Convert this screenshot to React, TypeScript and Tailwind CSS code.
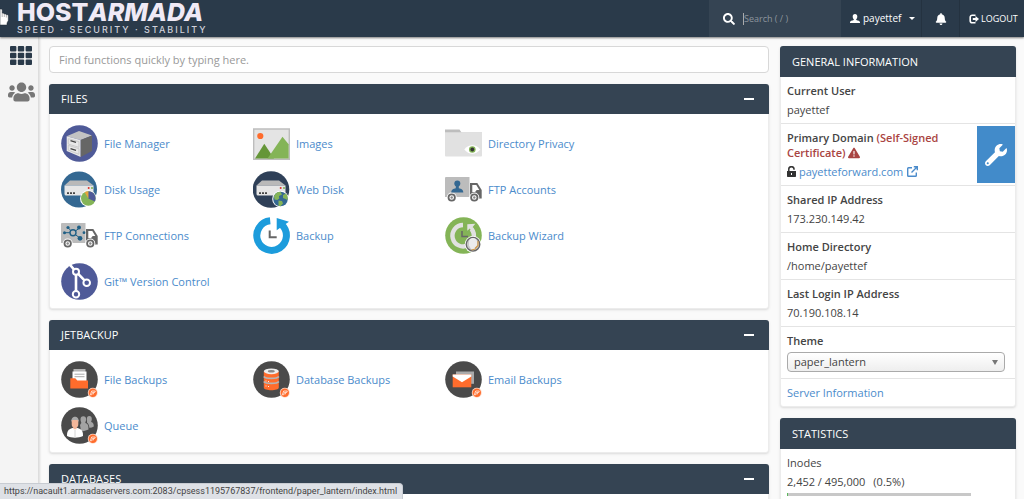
import type { ReactNode } from "react";
import { FaBell, FaSearch, FaUsers, FaWrench } from "react-icons/fa";
import { FaTriangleExclamation } from "react-icons/fa6";

function Icon({ children }: { children: ReactNode }) {
  return (
    <svg className="w-[37px] h-[37px] shrink-0" viewBox="0 0 37 37" fill="none" aria-hidden="true">
      {children}
    </svg>
  );
}

function Server() {
  return (
    <>
      <path d="M9 9.5h17l6.5 5h-29z" fill="#b9b9b9" />
      <path d="M3.5 14.5h29V23a1.5 1.5 0 0 1-1.5 1.5H5A1.5 1.5 0 0 1 3.5 23z" fill="#e6e6e6" />
      <path d="M6 21.2h2v1.8H6zM9 21.2h2v1.8H9zM12 21.2h2v1.8h-2z" fill="#444" />
      <circle cx="27.7" cy="17" r="1" fill="#d9342b" />
      <circle cx="31" cy="17" r="1" fill="#7db04e" />
    </>
  );
}

function Truck({ children }: { children: ReactNode }) {
  return (
    <>
      <path d="M1 6h23.5v20H0V7a1 1 0 0 1 1-1z" fill="#bcbcbc" />
      <path d="M25 12h7.3l4.4 7v8.5H25z" fill="#666" />
      <path d="M27.3 14h4l3 5h-2.6l-1.6 2h-2.8z" fill="#fff" />
      <circle cx="6.7" cy="26.5" r="5" fill="#fff" />
      <circle cx="29.3" cy="26.5" r="5" fill="#fff" />
      <circle cx="6.7" cy="26.5" r="3.2" stroke="#666" strokeWidth="1.8" />
      <circle cx="29.3" cy="26.5" r="3.2" stroke="#666" strokeWidth="1.8" />
      <circle cx="6.7" cy="26.5" r="1.2" fill="#888" />
      <circle cx="29.3" cy="26.5" r="1.2" fill="#888" />
      {children}
    </>
  );
}

// Dark disc with the small orange badge shared by all JetBackup icons
function JetDisc({ children }: { children: ReactNode }) {
  return (
    <Icon>
      <circle cx="18.5" cy="18.5" r="18.3" fill="#4a4a4a" />
      {children}
      <circle cx="31.8" cy="31.8" r="5" fill="#ffd9c7" />
      <circle cx="31.8" cy="31.8" r="4.2" fill="#ff6c2c" />
      <path d="M29.3 33.8l1.4-3.8h3.6l-.5 1.4h-2.3l-.9 2.4zM32 33.5l.8-2" stroke="#fff" strokeWidth=".7" />
    </Icon>
  );
}

const icons = {
  fileManager: (
    <Icon>
      <circle cx="18.5" cy="18.5" r="18.3" fill="#4f5a98" />
      <path d="M5.7 11.3L18 6l13 4.5-11.3 4.6z" fill="#c3c3c3" />
      <path d="M5.7 11.3l14 3.8V32l-14-6z" fill="#e8e8e8" />
      <path d="M19.7 15.1L31 10.5V26l-11.3 6z" fill="#666" />
      <path d="M7.3 13.7l10.6 3v5.6l-10.6-3.2zM7.3 20.4l10.6 3.3v5.6L7.3 25.2z" stroke="#c4c4c4" strokeWidth=".8" />
      <path d="M9.5 15.7l5.5 1.6M9.5 23.6l5.5 1.8" stroke="#444" strokeWidth="1.3" />
    </Icon>
  ),
  diskUsage: (
    <Icon>
      <circle cx="18" cy="18.5" r="18" fill="#346892" />
      <Server />
      <circle cx="27.3" cy="27.5" r="8.3" fill="#fff" />
      <circle cx="27.3" cy="27.5" r="7.3" fill="#84b457" />
      <path d="M27.3 27.5v-7.3a7.3 7.3 0 0 1 6.6 10.4z" fill="#4f5a98" />
      <path d="M27.3 27.5v-7.3a7.3 7.3 0 0 0-3.6 1z" fill="#e8a33d" />
    </Icon>
  ),
  ftpConnections: (
    <Icon>
      <Truck>
        <path d="M12 15.7H3.5M12 15.7L7 10.7M12 15.7l7-5M12 15.7l7 5.5" stroke="#1f5f85" strokeWidth="1" />
        <circle cx="12" cy="15.7" r="3" fill="#bcbcbc" stroke="#1f5f85" strokeWidth="1.4" />
        <circle cx="3.5" cy="15.7" r="1.5" fill="#1f5f85" />
        <circle cx="7" cy="10.5" r="1.6" fill="#1f5f85" />
        <circle cx="18" cy="10.5" r="2" fill="#1f5f85" />
        <circle cx="19" cy="21.3" r="2.4" fill="#1f5f85" />
        <circle cx="23" cy="15.7" r="1.4" fill="#1f5f85" />
      </Truck>
    </Icon>
  ),
  git: (
    <Icon>
      <circle cx="18.5" cy="18.5" r="18.3" fill="#4f5a98" />
      <path d="M9 1.8l6 6.9v22.6M15 8.7l10.7 11" stroke="#fff" strokeWidth="2.6" />
      <g fill="#4f5a98" stroke="#fff" strokeWidth="2">
        <circle cx="15" cy="8.7" r="3" />
        <circle cx="25.7" cy="19.7" r="3.3" />
        <circle cx="15" cy="31.2" r="3.2" />
      </g>
    </Icon>
  ),
  images: (
    <Icon>
      <path d="M.7 4h35.6v30.3H.7z" fill="#e4e4e4" stroke="#bdbdbd" strokeWidth="1.4" />
      <circle cx="7.3" cy="11" r="3.1" fill="#ff6c2c" />
      <path d="M2 33.5l9.3-14.8L21 33.5z" fill="#659638" />
      <path d="M14.5 33.5l15-21.8 6.1 7.5v14.3z" fill="#84b457" />
    </Icon>
  ),
  webDisk: (
    <Icon>
      <circle cx="18" cy="18.5" r="18.3" fill="#2f4058" />
      <Server />
      <circle cx="27.5" cy="28" r="8.3" fill="#fff" />
      <circle cx="27.5" cy="28" r="7.3" fill="#346892" />
      <path d="M21 25c1.5-3 4-4.5 6.5-4.3l1.5 2.8-3 1.5.3 2.5-2 1.5-2.8-.5zM30 24l3-1.5c1.5 2 2 4.5 1.5 6.5l-2-1-2.5-1zM25.5 29.5l3.5.5 1 2.5-2.5 2.7-2-.5z" fill="#84b457" />
    </Icon>
  ),
  backup: (
    <Icon>
      <path d="M17.2 3.8a14.8 14.8 0 1 0 11.6 4" stroke="#1c9cdc" strokeWidth="7" />
      <path d="M23.7 1l12.3 3.7-4.5 3-7.8 5.6z" fill="#1c9cdc" />
      <path d="M16.7 13.5v6.8h7" stroke="#666" strokeWidth="2" />
    </Icon>
  ),
  directoryPrivacy: (
    <Icon>
      <path d="M0 4.5h14.5l2 3H37v4H0z" fill="#bdbdbd" />
      <path d="M0 7.3h37v23.2a1 1 0 0 1-1 1H1a1 1 0 0 1-1-1z" fill="#e1e1e1" />
      <path d="M19.3 24.5c4.5-5.6 11.5-5.6 16 0-4.5 5.6-11.5 5.6-16 0z" fill="#fff" />
      <circle cx="27.3" cy="24.5" r="3.3" fill="#84b457" />
      <circle cx="27.3" cy="24.5" r="1.9" fill="#333" />
    </Icon>
  ),
  ftpAccounts: (
    <Icon>
      <Truck>
        <circle cx="12.3" cy="12.5" r="3" fill="#346892" />
        <path d="M10.8 14h3v3.2c2.5.6 4.5 1.2 4.5 4.3h-12c0-3.1 2-3.7 4.5-4.3z" fill="#346892" />
      </Truck>
    </Icon>
  ),
  backupWizard: (
    <Icon>
      <circle cx="18.5" cy="18.5" r="18.3" fill="#84b457" />
      <path d="M18 8a10.7 10.7 0 1 0 8.5 4" stroke="#e1e1e1" strokeWidth="4.4" />
      <path d="M22.3 7.2l8-.5-2.6 3.3 2.3 4.5-3 1-2.2-4-2.5 2.3z" fill="#e1e1e1" />
      <path d="M17 14v5.5h6" stroke="#666" strokeWidth="1.5" />
      <circle cx="28" cy="27.3" r="8.3" fill="#fff" />
      <circle cx="28" cy="27.3" r="6.8" fill="#c8c8c8" stroke="#666" strokeWidth="1.4" />
      <path d="M24 25a4 4 0 0 1 8 0v3.5l-2 3.5h-4l-2-3.5z" fill="#ececec" />
      <path d="M30 31.5l3-3V24M26.5 33l4-1" stroke="#d29a4a" strokeWidth="1.2" />
    </Icon>
  ),
  fileBackups: (
    <JetDisc>
      <path d="M12.5 8h12v11h-12z" fill="#b5b5b5" />
      <path d="M11.5 10.5h14V22h-14z" fill="#fff" />
      <path d="M13.5 13.2h10M13.5 15.7h10" stroke="#aaa" strokeWidth="1" />
      <path d="M9.3 17.3h5l2 2.3H27v8H9.3z" fill="#ff6c2c" />
    </JetDisc>
  ),
  databaseBackups: (
    <JetDisc>
      <path d="M10.8 10.5v16c0 3.6 15 3.6 15 0v-16z" fill="#ff6c2c" />
      <path d="M10.8 15.5c2 2.5 13 2.5 15 0M10.8 20.5c2 2.5 13 2.5 15 0" stroke="#b5b5b5" strokeWidth="1.8" />
      <ellipse cx="18.3" cy="10.3" rx="7.5" ry="2.9" fill="#eee" />
      <ellipse cx="18.3" cy="10.3" rx="3.5" ry="1.2" fill="#888" />
      <path d="M13 19.5v1M15.5 20v1M13 24.5v1M15.5 25v1" stroke="#fff" strokeWidth=".9" />
    </JetDisc>
  ),
  emailBackups: (
    <JetDisc>
      <path d="M11 10.5h18v12.3H11z" fill="#aaa" />
      <path d="M7.7 13.5h18.6v12.8H7.7z" fill="#ff6c2c" />
      <path d="M7.7 13.5h18.6v2L17 21.3l-9.3-5.8z" fill="#fff" />
    </JetDisc>
  ),
  queue: (
    <JetDisc>
      <g fill="#a3a3a3">
        <path d="M19.5 12.5a2.8 3.3 0 0 1 5.6 0c0 1.5-.8 2.5-.8 3.5 2.5 1 3.2 1.5 3.2 6.5-2 1-5 2-7.5 1.5l-1-6 1.3-2c0-1-.8-2-.8-3.5z" />
        <path d="M25.8 12a2.5 3 0 0 1 5 0c0 1.5-.6 2-.6 3 2 .8 2.6 1.5 2.6 4.5-1.5 1-3 1.3-4.5 1.2-.2-2.5-.8-4-2.3-5 .3-1-.2-2.2-.2-3.7z" />
      </g>
      <path d="M6 29c0-5 1-6.5 5.5-8h5c4.5 1.5 5.5 3 5.5 8-4.5 2.2-11.5 2.2-16 0z" fill="#fff" />
      <path d="M10.7 13h6.6v4.5c0 2-1.3 3-1.8 3.5v1.2h-3V21c-.5-.5-1.8-1.5-1.8-3.5z" fill="#f4b79a" />
      <path d="M10.3 15c-.5-7 8-7 7.5 0l-1.3-2h-5z" fill="#aaa" />
      <path d="M14 23v7.5" stroke="#ccc" strokeWidth=".8" />
    </JetDisc>
  ),
};

const files = [
  { label: "File Manager", icon: icons.fileManager },
  { label: "Images", icon: icons.images },
  { label: "Directory Privacy", icon: icons.directoryPrivacy },
  { label: "Disk Usage", icon: icons.diskUsage },
  { label: "Web Disk", icon: icons.webDisk },
  { label: "FTP Accounts", icon: icons.ftpAccounts },
  { label: "FTP Connections", icon: icons.ftpConnections },
  { label: "Backup", icon: icons.backup },
  { label: "Backup Wizard", icon: icons.backupWizard },
  { label: "Git™ Version Control", icon: icons.git },
];

const jetbackup = [
  { label: "File Backups", icon: icons.fileBackups },
  { label: "Database Backups", icon: icons.databaseBackups },
  { label: "Email Backups", icon: icons.emailBackups },
  { label: "Queue", icon: icons.queue },
];

type Item = { label: string; icon: ReactNode };

function AppGroup({ title, items }: { title: string; items: Item[] }) {
  return (
    <section className="bg-white border border-[#ececec] rounded-[3px] shadow-sm">
      <div className="flex items-center justify-between h-[30px] -mx-px -mt-px pl-3 pr-[15px] pb-px bg-[#354453] rounded-t-[3px]">
        <h2 className="text-white">{title}</h2>
        <button type="button" aria-label={`Collapse ${title}`} className="w-[10px] h-4 flex items-center">
          <span className="w-full h-[2px] bg-white" />
        </button>
      </div>
      <div className="grid grid-cols-[repeat(auto-fill,192px)] pl-[11px] pt-[6px] pb-1">
        {items.map((item) => (
          <a key={item.label} href="#" className="flex items-center gap-[6px] h-[46px] text-[#4b8bcb]">
            {item.icon}
            {item.label}
          </a>
        ))}
      </div>
    </section>
  );
}

function InfoRow({ label, value }: { label: string; value: string }) {
  return (
    <div className="px-[6px] py-[6px] border-b border-[#e4e4e4]">
      <div className="font-semibold">{label}</div>
      <div className="mt-1">{value}</div>
    </div>
  );
}

function PanelHeader({ title }: { title: string }) {
  return (
    <div className="flex items-center h-[31px] -mx-px -mt-px px-3 bg-[#354453] rounded-t-[3px]">
      <h2 className="text-white">{title}</h2>
    </div>
  );
}

export default function App() {
  return (
    <div className="flex flex-col h-screen overflow-hidden bg-[#fafafa] font-['Open_Sans',sans-serif] text-[11px] leading-[15px] text-[#444]">
      {/* Top bar */}
      <header className="relative z-10 flex justify-between h-[37px] shrink-0 bg-[#2a3a4a] text-white shadow-[0_1px_2px_rgba(0,0,0,0.5)]">
        <a href="#" className="pl-[17px] text-[#f0eaf6] font-['Inter',sans-serif]">
          <div className="text-[25px] leading-6 font-extrabold">
            HOST<span className="italic">ARMADA</span>
          </div>
          <div className="text-[9px] leading-3 font-medium tracking-[2px] text-[#cfd0da]">SPEED · SECURITY · STABILITY</div>
        </a>
        <div className="flex">
          <label className="flex items-center gap-2 w-[132px] pl-[14px] bg-[#354453]">
            <FaSearch className="size-3 shrink-0" />
            <input
              type="text"
              aria-label="Search"
              placeholder="Search ( / )"
              className="w-20 h-3 text-[9px] border-l border-[#aaa] placeholder:text-[#8d959d] outline-none"
            />
          </label>
          <button type="button" className="flex items-center gap-[3px] w-[81px] pl-[9px] border-r border-[#243240] text-[10px]">
            <svg className="w-[10px] h-[9px]" viewBox="0 0 10 9" fill="currentColor" aria-hidden="true">
              <path d="M5 0c1.5 0 2.3 1 2.3 2.5S6.700 4.900 6.200 5.300v.7c1.800.6 3.800 1 3.800 2.200V9H0v-.8C0 7 2 6.600 3.800 6v-.7c-.5-.4-1.100-1.300-1.100-2.800S3.500 0 5 0z" />
            </svg>
            payettef
            <svg className="w-[6px] h-[3px] ml-[5px]" viewBox="0 0 6 3" fill="currentColor" aria-hidden="true">
              <path d="M0 0h6L3 3z" />
            </svg>
          </button>
          <button type="button" aria-label="Notifications" className="flex items-center justify-center w-[38px] border-r border-[#243240]">
            <FaBell className="size-3" />
          </button>
          <a href="#" className="flex items-center gap-[2px] w-[64px] pl-[9px] text-[9px]">
            <svg className="size-[10px] shrink-0" viewBox="0 0 10 10" fill="none" stroke="currentColor" aria-hidden="true">
              <path d="M6.5 1.2H3.2A2 2 0 0 0 1.2 3.2v3.6a2 2 0 0 0 2 2h3.3" strokeWidth="1.6" />
              <path d="M3.8 5H7" strokeWidth="2" />
              <path d="M6.5 2L10 5 6.5 8z" fill="currentColor" stroke="none" />
            </svg>
            LOGOUT
          </a>
        </div>
      </header>

      <div className="flex flex-1 min-h-0">
        {/* Side navigation */}
        <nav className="flex flex-col items-center gap-4 w-[39px] shrink-0 pt-[9px] pl-1 bg-[#f4f4f4] border-r border-[#ddd] shadow-[1px_0_2px_rgba(0,0,0,0.12)]">
          <a href="#" aria-label="Home">
            <svg className="w-[22px] h-[19px]" viewBox="0 0 22 19" fill="#2a3a4a" aria-hidden="true">
              {[0, 6.7, 13.4].map((y) =>
                [0, 7.8, 15.6].map((x) => <rect key={`${x}-${y}`} x={x} y={y} width="6.4" height="5.6" rx="1" />)
              )}
            </svg>
          </a>
          <a href="#" aria-label="User manager" className="text-[#777]">
            <FaUsers className="w-[27px] h-[22px]" />
          </a>
        </nav>

        {/* Application groups */}
        <main className="flex flex-col flex-1 min-w-0 gap-[11px] pl-[10px] pr-[11px] pt-[9px]">
          <input
            type="text"
            aria-label="Find functions"
            placeholder="Find functions quickly by typing here."
            className="w-full h-[27px] shrink-0 px-[9px] bg-white border border-[#d8d8d8] rounded placeholder:text-[#999]"
          />
          <AppGroup title="FILES" items={files} />
          <AppGroup title="JETBACKUP" items={jetbackup} />
          <AppGroup title="DATABASES" items={[]} />
        </main>

        {/* Account details */}
        <aside className="flex flex-col gap-[11px] w-[236px] shrink-0 mr-2 pt-[9px]">
          <section className="shrink-0 bg-white border border-[#ececec] rounded-[3px] shadow-sm">
            <PanelHeader title="GENERAL INFORMATION" />
            <InfoRow label="Current User" value="payettef" />
            <div className="flex justify-between border-b border-[#e4e4e4]">
              <div className="px-[6px] py-[6px]">
                <div className="font-semibold">
                  Primary Domain{" "}
                  <span className="text-[#a94442]">
                    (Self-Signed Certificate) <FaTriangleExclamation className="inline size-3 align-[-2px]" />
                  </span>
                </div>
                <div className="flex items-center gap-[3px] mt-1">
                  <svg className="w-[9px] h-[11px]" viewBox="0 0 9 11" aria-hidden="true">
                    <path d="M1.8 5.5V3a2.5 2.2 0 0 1 5.2 0v.8" fill="none" stroke="#333" strokeWidth="1.5" />
                    <path d="M0 5h9v5.3a.7.7 0 0 1-.7.7H.7a.7.7 0 0 1-.7-.7z" fill="#333" />
                    <path d="M4 7h1v2H4z" fill="#fff" />
                  </svg>
                  <a href="#" className="flex items-center gap-1 text-[#4b8bcb]">
                    payetteforward.com
                    <svg className="size-[11px]" viewBox="0 0 11 11" fill="none" stroke="currentColor" strokeWidth="1.4" aria-hidden="true">
                      <path d="M5 1.7H1.5a.8.8 0 0 0-.8.8v7a.8.8 0 0 0 .8.8h7a.8.8 0 0 0 .8-.8V6.5M4.5 6.5L10 1M6.8.8h3.5v3.5" />
                    </svg>
                  </a>
                </div>
              </div>
              <button type="button" aria-label="Manage SSL" className="flex items-center justify-center w-[38px] shrink-0 my-[2px] bg-[#428bca] text-white">
                <FaWrench className="size-[22px]" />
              </button>
            </div>
            <InfoRow label="Shared IP Address" value="173.230.149.42" />
            <InfoRow label="Home Directory" value="/home/payettef" />
            <InfoRow label="Last Login IP Address" value="70.190.108.14" />
            <div className="pl-[6px] pr-[10px] py-[6px] border-b border-[#e4e4e4]">
              <label htmlFor="theme" className="block font-semibold">
                Theme
              </label>
              <div className="relative mt-1">
                <select
                  id="theme"
                  className="w-full h-5 pl-[6px] appearance-none leading-4 bg-linear-to-b from-white to-[#eee] border border-[#aaa] rounded"
                >
                  <option>paper_lantern</option>
                </select>
                <svg className="absolute right-[7px] top-2 w-[6px] h-[5px] pointer-events-none" viewBox="0 0 6 5" fill="#777" aria-hidden="true">
                  <path d="M0 0h6L3 5z" />
                </svg>
              </div>
            </div>
            <div className="px-[6px] py-[6px]">
              <a href="#" className="text-[#4b8bcb]">
                Server Information
              </a>
            </div>
          </section>

          <section className="shrink-0 bg-white border border-[#ececec] rounded-[3px] shadow-sm">
            <PanelHeader title="STATISTICS" />
            <div className="px-[6px] py-[6px]">
              <div>Inodes</div>
              <div className="flex gap-2 mt-1">
                <span>2,452 / 495,000</span>
                <span>(0.5%)</span>
              </div>
              <div className="w-[83%] h-[3px] mt-1 bg-[#c8c8c8]">
                <div className="w-[0.5%] h-full bg-[#5cb85c]" />
              </div>
            </div>
          </section>
        </aside>
      </div>

      {/* Link target bubble */}
      <div className="fixed left-0 bottom-0 z-20 h-4 pl-1 pr-[5px] bg-[#dee1e6] border-t border-r border-[#c8ccd2] rounded-tr font-['Roboto',sans-serif] text-[9px] leading-[15px] text-[#444]">
        https://nacault1.armadaservers.com:2083/cpsess1195767837/frontend/paper_lantern/index.html
      </div>

      {/* Hand pointer */}
      <svg className="fixed left-0 top-2 z-20 w-[9px] h-[18px]" viewBox="0 0 9 18" aria-hidden="true">
        <path d="M0 1h1.2a1 1 0 0 1 1 1v3l1.3.2.5.5 1.5.2.5.6 1.4.2.9.9v5L7 15v2H0z" fill="#fff" stroke="#1d2833" strokeWidth=".5" />
        <path d="M2.2 5v4M4.3 6v3M6.4 7v2.5" stroke="#444" strokeWidth=".4" />
      </svg>
    </div>
  );
}
